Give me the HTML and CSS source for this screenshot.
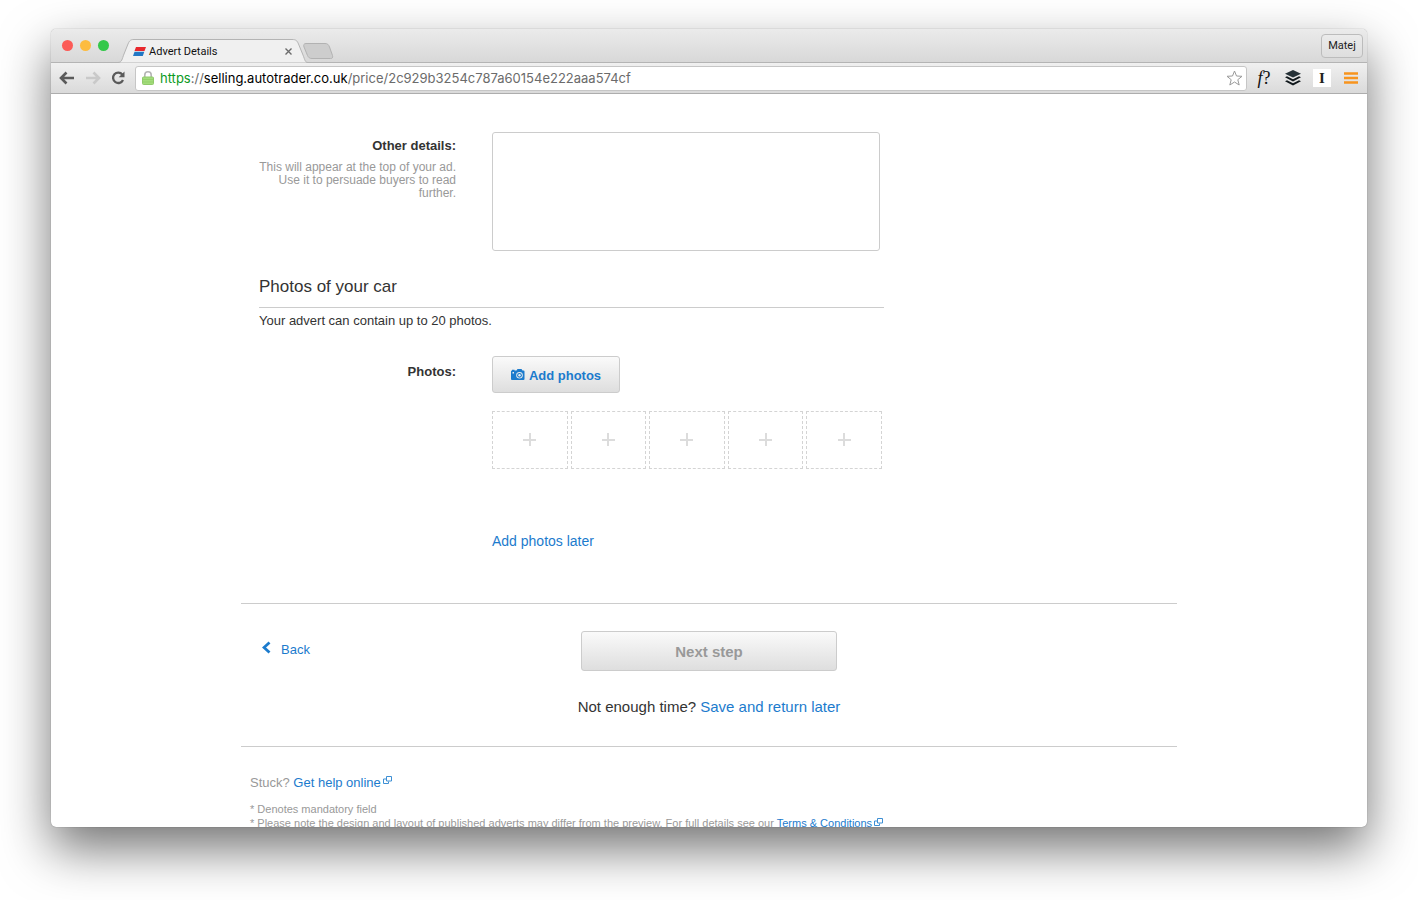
FILE: index.html
```html
<!DOCTYPE html>
<html lang="en">
<head>
  <meta charset="UTF-8">
  <meta name="viewport" content="width=device-width, initial-scale=1.0">
  <title>Advert Details</title>
  <link rel="stylesheet" href="styles.css">
</head>
<body>

<div class="window">
  <header class="tab-strip">
    <div class="lights">
      <span class="light red"></span>
      <span class="light yellow"></span>
      <span class="light green"></span>
    </div>
    <div class="tab">
      <svg class="tab-shape" width="190" height="24" viewBox="0 0 190 24" aria-hidden="true">
        <path d="M0 23.500C4 23.500 4 20 6 15L10 5C11.500 1.500 12.500 .5 16 .5H174C178 .5 179 1.500 180.500 5L185 16C187 21 187 23.500 190 23.500" fill="#f0f0f0" stroke="#b4b4b4"/>
      </svg>
      <svg class="favicon" width="13" height="9" viewBox="0 0 13 9" aria-hidden="true">
        <path d="M3 0H13L11.500 4H1.500Z" fill="#e8282d"/>
        <path d="M1.500 4.800H11.300L9.800 9H0Z" fill="#2277c4"/>
      </svg>
      <span class="tab-title">Advert Details</span>
      <button class="tab-close" type="button" aria-label="Close tab">
        <svg width="7" height="7" viewBox="0 0 7 7"><path d="M.5 .5L6.500 6.500M6.500 .5L.5 6.500" stroke="#6b6b6b" stroke-width="1.400"/></svg>
      </button>
    </div>
    <button class="new-tab" type="button" aria-label="New tab">
      <svg width="31" height="16" viewBox="0 0 31 16"><path d="M3 .5H22C24.500 .5 25.500 1.500 26.500 4L29.500 12.500C30 14.500 29.500 15.500 27.500 15.500H9C6.500 15.500 5.500 14.500 4.500 12.500L1 4C.3 2 .8 .5 3 .5Z" fill="#cdcdcd" stroke="#b2b2b2"/></svg>
    </button>
    <button class="user" type="button">Matej</button>
  </header>

  <nav class="toolbar">
    <button class="tool" type="button" aria-label="Back">
      <svg width="16" height="14" viewBox="0 0 16 14"><path d="M7.500 1.500L2 7L7.500 12.500M2 7H15" fill="none" stroke="#5a5a5a" stroke-width="2.600"/></svg>
    </button>
    <button class="tool" type="button" aria-label="Forward">
      <svg width="16" height="14" viewBox="0 0 16 14"><path d="M8.500 1.500L14 7L8.500 12.500M14 7H1" fill="none" stroke="#c9c9c9" stroke-width="2.600"/></svg>
    </button>
    <button class="tool" type="button" aria-label="Reload">
      <svg width="14" height="14" viewBox="0 0 14 14"><path d="M11.300 3.500A5.200 5.200 0 1 0 12 9" fill="none" stroke="#5a5a5a" stroke-width="2.300"/><path d="M13.500 .5V6.300H7.700Z" fill="#5a5a5a"/></svg>
    </button>
    <div class="address">
      <svg width="12" height="14" viewBox="0 0 12 14" aria-hidden="true">
        <path d="M2.800 7V4A3.200 3.200 0 0 1 9.200 4V7" fill="none" stroke="#b5b5b5" stroke-width="1.600"/>
        <rect x=".5" y="6" width="11" height="7.500" rx="1" fill="#a3dc7c" stroke="#90c96b"/>
        <path d="M1 8.500H11M1 11H11" stroke="#93d169"/>
      </svg>
      <div class="url" role="textbox" aria-label="Address" contenteditable="true" spellcheck="false"><span class="secure">https</span>://<span class="host">selling.autotrader.co.uk</span>/price/2c929b3254c787a60154e222aaa574cf</div>
      <button class="star" type="button" aria-label="Bookmark">
        <svg width="17" height="16" viewBox="0 0 17 16"><path d="M8.500 1L10.500 6L16 6.300L11.800 9.700L13.200 15L8.500 12L3.800 15L5.200 9.700L1 6.300L6.500 6Z" fill="#fff" stroke="#9a9a9a" stroke-linejoin="round"/></svg>
      </button>
    </div>
    <button class="ext font-ext" type="button"><i>f</i>?</button>
    <button class="ext" type="button" aria-label="Buffer">
      <svg width="16" height="16" viewBox="0 0 16 16"><path d="M8 0L16 3.800L8 7.600L0 3.800Z" fill="#263238"/><path d="M0 7.200L2 6.300L8 9.200L14 6.300L16 7.200L8 11.400Z" fill="#10181c"/><path d="M0 11.200L2 10.300L8 13.200L14 10.300L16 11.200L8 15.600Z" fill="#10181c"/></svg>
    </button>
    <button class="ext instapaper" type="button">I</button>
    <button class="ext" type="button" aria-label="Menu">
      <svg width="14" height="12" viewBox="0 0 14 12"><path d="M0 1.500H14M0 6H14M0 10.500H14" stroke="#f7941e" stroke-width="2.600"/></svg>
    </button>
  </nav>

  <main class="page">
    <form class="advert">
      <div class="row">
        <div class="row-label">
          <label for="details">Other details:</label>
          <p class="hint" id="details-hint">This will appear at the top of your ad. Use it to persuade buyers to read further.</p>
        </div>
        <textarea id="details" class="details" aria-describedby="details-hint"></textarea>
      </div>

      <h2>Photos of your car</h2>
      <p class="intro">Your advert can contain up to 20 photos.</p>

      <div class="row">
        <div class="row-label photos-label"><span id="photos-label">Photos:</span></div>
        <div class="photos" role="group" aria-labelledby="photos-label">
          <button class="btn add-photos" type="button">
            <svg width="14" height="13" viewBox="0 0 14 13" aria-hidden="true">
              <path fill-rule="evenodd" d="M0 2.500Q0 1.500 1 1.500V.8H3.500V1.500H5.500L6.500 0H10.500L11.500 1.500H12.500Q13.500 1.500 13.500 2.500V10Q13.500 11 12.500 11H1Q0 11 0 10ZM8.500 3A3.300 3.300 0 1 0 8.500 9.600A3.300 3.300 0 1 0 8.500 3ZM1.500 3V4.500H3V3Z" fill="#1c7bcd"/>
              <circle cx="8.500" cy="6.300" r="2.400" fill="#1c7bcd"/>
              <circle cx="8.500" cy="6.300" r="1.200" fill="#e8f1f9"/>
            </svg>
            Add photos
          </button>
          <div class="slots">
            <button class="slot" type="button" aria-label="Add photo 1"></button>
            <button class="slot" type="button" aria-label="Add photo 2"></button>
            <button class="slot" type="button" aria-label="Add photo 3"></button>
            <button class="slot" type="button" aria-label="Add photo 4"></button>
            <button class="slot" type="button" aria-label="Add photo 5"></button>
          </div>
          <a class="later" href="#">Add photos later</a>
        </div>
      </div>
    </form>

    <section class="actions">
      <a class="back" href="#">
        <svg width="9" height="13" viewBox="0 0 9 13" aria-hidden="true"><path d="M7.500 1.500L2 6.500L7.500 11.500" fill="none" stroke="#1c7bcd" stroke-width="2.800"/></svg>
        Back
      </a>
      <div class="next">
        <button class="btn next-step" type="button" disabled>Next step</button>
        <p class="save"><span>Not enough time? <a href="#">Save and return later</a></span></p>
      </div>
    </section>

    <footer class="help">
      <p class="stuck">Stuck? <a href="#">Get help online<svg class="external" width="9" height="8" viewBox="0 0 9 8" aria-hidden="true"><path d="M3.500 .5H8.500V5H3.500ZM3 3H.5V7.500H5.500V5.500" fill="none" stroke="#3d8fd4"/></svg></a></p>
      <p>* Denotes mandatory field</p>
      <p>* Please note the design and layout of published adverts may differ from the preview. For full details see our <a href="#">Terms &amp; Conditions<svg class="external small" width="9" height="8" viewBox="0 0 9 8" aria-hidden="true"><path d="M3.500 .5H8.500V5H3.500ZM3 3H.5V7.500H5.500V5.500" fill="none" stroke="#3d8fd4"/></svg></a></p>
    </footer>
  </main>
</div>

</body>
</html>
```
FILE: styles.css
```css
* {
  box-sizing: border-box;
}
body {
  margin: 0;
  height: 100vh;
  padding: 29px 51px 73px;
  display: flex;
  background: #fff;
  color: #333;
  font-family: "Liberation Sans", Arial, sans-serif;
  font-size: 13px;
}
h2, p {
  margin: 0;
}
button {
  padding: 0;
  border: 0;
  background: none;
  font: inherit;
  color: inherit;
}
svg {
  display: block;
}
a {
  color: #1c7bcd;
  text-decoration: none;
}

/* browser window */
.window {
  flex: 1;
  min-width: 0;
  display: flex;
  flex-direction: column;
  overflow: hidden;
  border-radius: 5px;
  background: #fff;
  box-shadow: 0 0 1px rgba(0, 0, 0, 0.5), 0 22px 50px rgba(0, 0, 0, 0.55);
}
.tab-strip {
  flex: none;
  display: flex;
  align-items: flex-end;
  height: 34px;
  padding: 0 4px 0 11px;
  border-bottom: 1px solid #b4b4b4;
  background: linear-gradient(#ebebeb, #d8d8d8);
  font-family: Roboto, sans-serif;
}
.lights {
  align-self: center;
  display: flex;
  gap: 7px;
  width: 56px;
}
.light {
  width: 11px;
  height: 11px;
  border-radius: 50%;
}
.red {
  background: #fc5b57;
}
.yellow {
  background: #fdbc40;
}
.green {
  background: #34c84a;
}
.tab {
  position: relative;
  display: flex;
  align-items: center;
  width: 190px;
  height: 24px;
  margin-bottom: -1px;
  padding: 0 16px 0 15px;
  color: #111;
  font-size: 11px;
}
.tab-shape {
  position: absolute;
  left: 0;
  top: 0;
}
.favicon, .tab-title, .tab-close {
  position: relative;
}
.tab-title {
  flex: 1;
  margin-left: 3px;
}
.new-tab {
  margin: 0 0 3px -5px;
}
.user {
  align-self: center;
  width: 42px;
  height: 24px;
  margin-left: auto;
  border: 1px solid #bcbcbc;
  border-radius: 4px;
  background: linear-gradient(#ebebeb, #dedede);
  color: #222;
  font-size: 11px;
}
.toolbar {
  flex: none;
  display: flex;
  align-items: center;
  height: 31px;
  padding: 0 9px 0 8px;
  border-bottom: 1px solid #adadad;
  background: linear-gradient(#f0f0f0, #dadada);
}
.tool {
  width: 26px;
  flex: none;
}
.address {
  flex: 1;
  min-width: 0;
  display: flex;
  align-items: center;
  height: 25px;
  margin: 0 8px 0 -2px;
  padding: 0 3px 0 6px;
  border: 1px solid #c6c6c6;
  border-radius: 3px;
  background: #fff;
}
.url {
  flex: 1;
  min-width: 0;
  margin-left: 6px;
  overflow: hidden;
  white-space: nowrap;
  outline: none;
  color: #6b6b6b;
  font-family: Inter, sans-serif;
  font-size: 13px;
}
.secure {
  color: #0a9a1e;
}
.host {
  color: #000;
}
.ext {
  display: flex;
  align-items: center;
  justify-content: center;
  width: 18px;
  height: 18px;
  margin-left: 11px;
}
.ext:last-child {
  width: 14px;
  margin-left: 13px;
}
.font-ext {
  margin-left: 0;
  color: #111;
  font-family: "Liberation Serif", serif;
  font-size: 18px;
}
.instapaper {
  background: #fff;
  color: #222;
  font-family: "Liberation Serif", serif;
  font-size: 15px;
  font-weight: bold;
}

/* advert form */
.page {
  flex: 1;
  min-height: 0;
  width: 100%;
  max-width: 936px;
  margin: 0 auto;
  overflow: hidden;
}
.advert {
  width: 643px;
  max-width: 100%;
  padding: 38px 0 53px 18px;
}
.row {
  display: grid;
  grid-template-columns: 197px 390px;
  column-gap: 36px;
}
.row-label {
  padding-top: 5px;
  font-weight: bold;
  line-height: 18px;
  text-align: right;
}
.photos-label {
  padding-top: 7px;
}
.hint {
  margin-top: 6px;
  color: #999;
  font-size: 12px;
  font-weight: normal;
  line-height: 13px;
}
.details {
  display: block;
  width: 388px;
  height: 119px;
  border: 1px solid #ccc;
  border-radius: 3px;
  resize: none;
}
h2 {
  margin-top: 26px;
  padding-bottom: 10px;
  border-bottom: 1px solid #ccc;
  font-size: 17px;
  font-weight: normal;
  line-height: 20px;
}
.intro {
  margin: 4px 0 26px;
  line-height: 18px;
}
.btn {
  border: 1px solid #ccc;
  border-radius: 3px;
  background: linear-gradient(#fafafa, #dedede);
  font-weight: bold;
}
.add-photos {
  display: flex;
  align-items: center;
  justify-content: center;
  gap: 4px;
  width: 128px;
  height: 37px;
  padding-top: 1px;
  color: #1c7bcd;
}
.slots {
  display: grid;
  grid-template-columns: repeat(5, 1fr);
  gap: 3px;
  margin: 18px 0 63px;
}
.slot {
  display: grid;
  place-items: center;
  height: 58px;
  padding-bottom: 1px;
  border: 1px dashed #d4d4d4;
}
.slot::before, .slot::after {
  content: "";
  grid-area: 1 / 1;
  width: 13px;
  height: 2px;
  background: #dcdcdc;
}
.slot::after {
  width: 2px;
  height: 13px;
}
.later {
  display: block;
  font-size: 14px;
  line-height: 18px;
}

/* back and next */
.actions {
  display: grid;
  grid-template-columns: 1fr 256px 1fr;
  padding: 27px 0 29px;
  border-top: 1px solid #ccc;
  border-bottom: 1px solid #ccc;
}
.back {
  display: flex;
  align-items: flex-start;
  align-self: start;
  gap: 10px;
  padding: 10px 0 0 21px;
  line-height: 18px;
}
.next-step {
  width: 100%;
  height: 40px;
  color: #999;
  font-size: 15px;
}
.save {
  display: flex;
  justify-content: center;
  margin-top: 26px;
  font-size: 15px;
  line-height: 20px;
  white-space: nowrap;
}

/* help notes */
.help {
  padding: 26px 9px 0;
  color: #999;
  font-size: 11px;
  line-height: 14px;
}
.stuck {
  margin-bottom: 9px;
  font-size: 13px;
  line-height: 20px;
}
.external {
  display: inline-block;
  margin-left: 2px;
  vertical-align: 3px;
}
.small {
  vertical-align: 1px;
}
```
